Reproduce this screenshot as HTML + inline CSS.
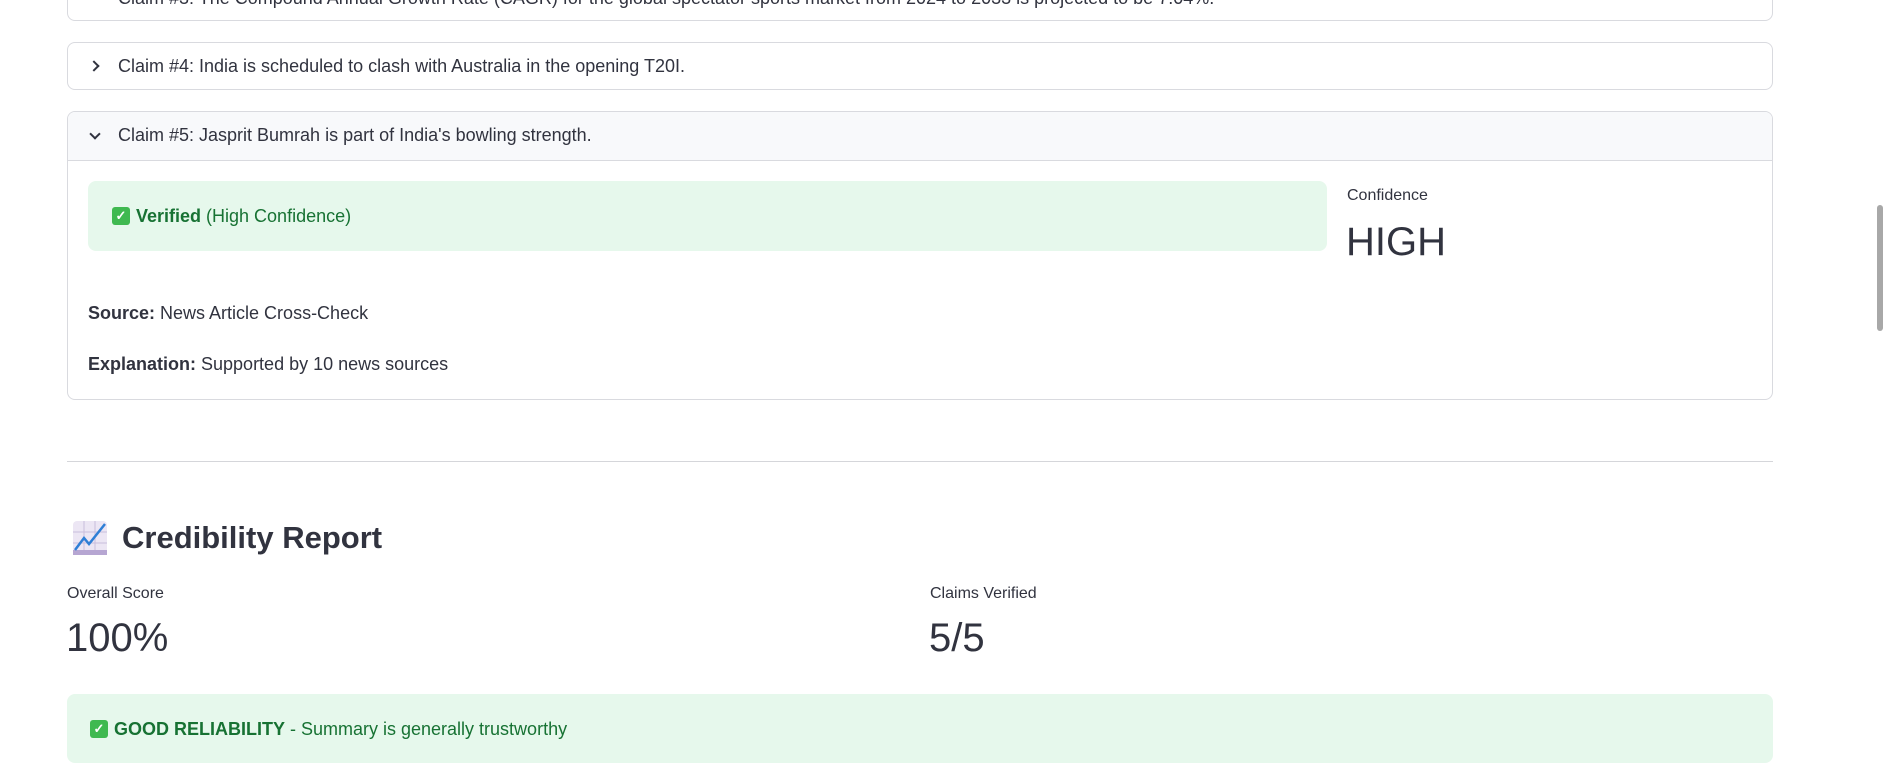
<!DOCTYPE html>
<html><head><meta charset="utf-8"><style>
*{margin:0;padding:0;box-sizing:border-box}
body{width:1886px;height:773px;overflow:hidden;background:#fff;font-family:"Liberation Sans",sans-serif;color:#31333f;position:relative}
.a{position:absolute}
.box{position:absolute;left:67px;width:1706px;border:1px solid #d9dadf;border-radius:8px;background:#fff}
.t{font-size:18px;white-space:nowrap;line-height:22px}
.chev{position:absolute;width:8px;height:8px;border-right:2px solid #31333f;border-bottom:2px solid #31333f}
.ok{display:inline-block;width:18px;height:18px;background:#3fb950;border-radius:3px;color:#fff;font-size:13px;line-height:18px;text-align:center;vertical-align:top;margin-top:2px;margin-right:6px;font-weight:bold}
.green{position:absolute;background:#e6f8ec;border-radius:8px;color:#177233}
</style></head><body>
<div class="box" style="top:-20px;height:41px"></div>
<div class="a t" style="left:118px;top:-13px;color:#31333f">Claim #3: The Compound Annual Growth Rate (CAGR) for the global spectator sports market from 2024 to 2033 is projected to be 7.04%.</div>

<div class="box" style="top:42px;height:48px"></div>
<div class="chev" style="left:90px;top:62px;transform:rotate(-45deg)"></div>
<div class="a t" style="left:118px;top:55px">Claim #4: India is scheduled to clash with Australia in the opening T20I.</div>

<div class="box" style="top:111px;height:289px;overflow:hidden">
  <div style="height:49px;background:#f8f9fb;border-bottom:1px solid #d9dadf"></div>
</div>
<div class="chev" style="left:91px;top:130px;transform:rotate(45deg)"></div>
<div class="a t" style="left:118px;top:124px">Claim #5: Jasprit Bumrah is part of India's bowling strength.</div>

<div class="green" style="left:88px;top:181px;width:1239px;height:70px"></div>
<div class="a t" style="left:112px;top:205px;color:#177233"><span class="ok">✓</span><b>Verified</b> (High Confidence)</div>
<div class="a" style="left:1347px;top:187px;font-size:16px">Confidence</div>
<div class="a" style="left:1346px;top:220px;font-size:40px">HIGH</div>
<div class="a t" style="left:88px;top:302px"><b>Source:</b> News Article Cross-Check</div>
<div class="a t" style="left:88px;top:353px"><b>Explanation:</b> Supported by 10 news sources</div>

<div class="a" style="left:67px;top:461px;width:1706px;height:1px;background:#d5d6da"></div>

<svg class="a" style="left:72px;top:520px" width="36" height="36" viewBox="0 0 36 36">
<rect x="1" y="1" width="34" height="34" rx="4" fill="#ece6f4"/>
<path d="M1 12H35M1 23H35M12 1V35M23 1V35" stroke="#c9bedc" stroke-width="1"/>
<rect x="1" y="30" width="34" height="5" fill="#b6a6d2"/>
<path d="M3 30L12 18L17 24L33 4" stroke="#2f7fd6" stroke-width="2.5" fill="none"/>
</svg>
<div class="a" style="left:122px;top:520px;font-size:31px;font-weight:bold">Credibility Report</div>

<div class="a" style="left:67px;top:585px;font-size:16px">Overall Score</div>
<div class="a" style="left:66px;top:616px;font-size:40px">100%</div>
<div class="a" style="left:930px;top:585px;font-size:16px">Claims Verified</div>
<div class="a" style="left:929px;top:616px;font-size:40px">5/5</div>

<div class="green" style="left:67px;top:694px;width:1706px;height:69px"></div>
<div class="a t" style="left:90px;top:718px;color:#177233"><span class="ok">✓</span><b>GOOD RELIABILITY</b> - Summary is generally trustworthy</div>

<div class="a" style="left:1877px;top:205px;width:6px;height:126px;background:#a8a8a8;border-radius:3px"></div>
</body></html>
